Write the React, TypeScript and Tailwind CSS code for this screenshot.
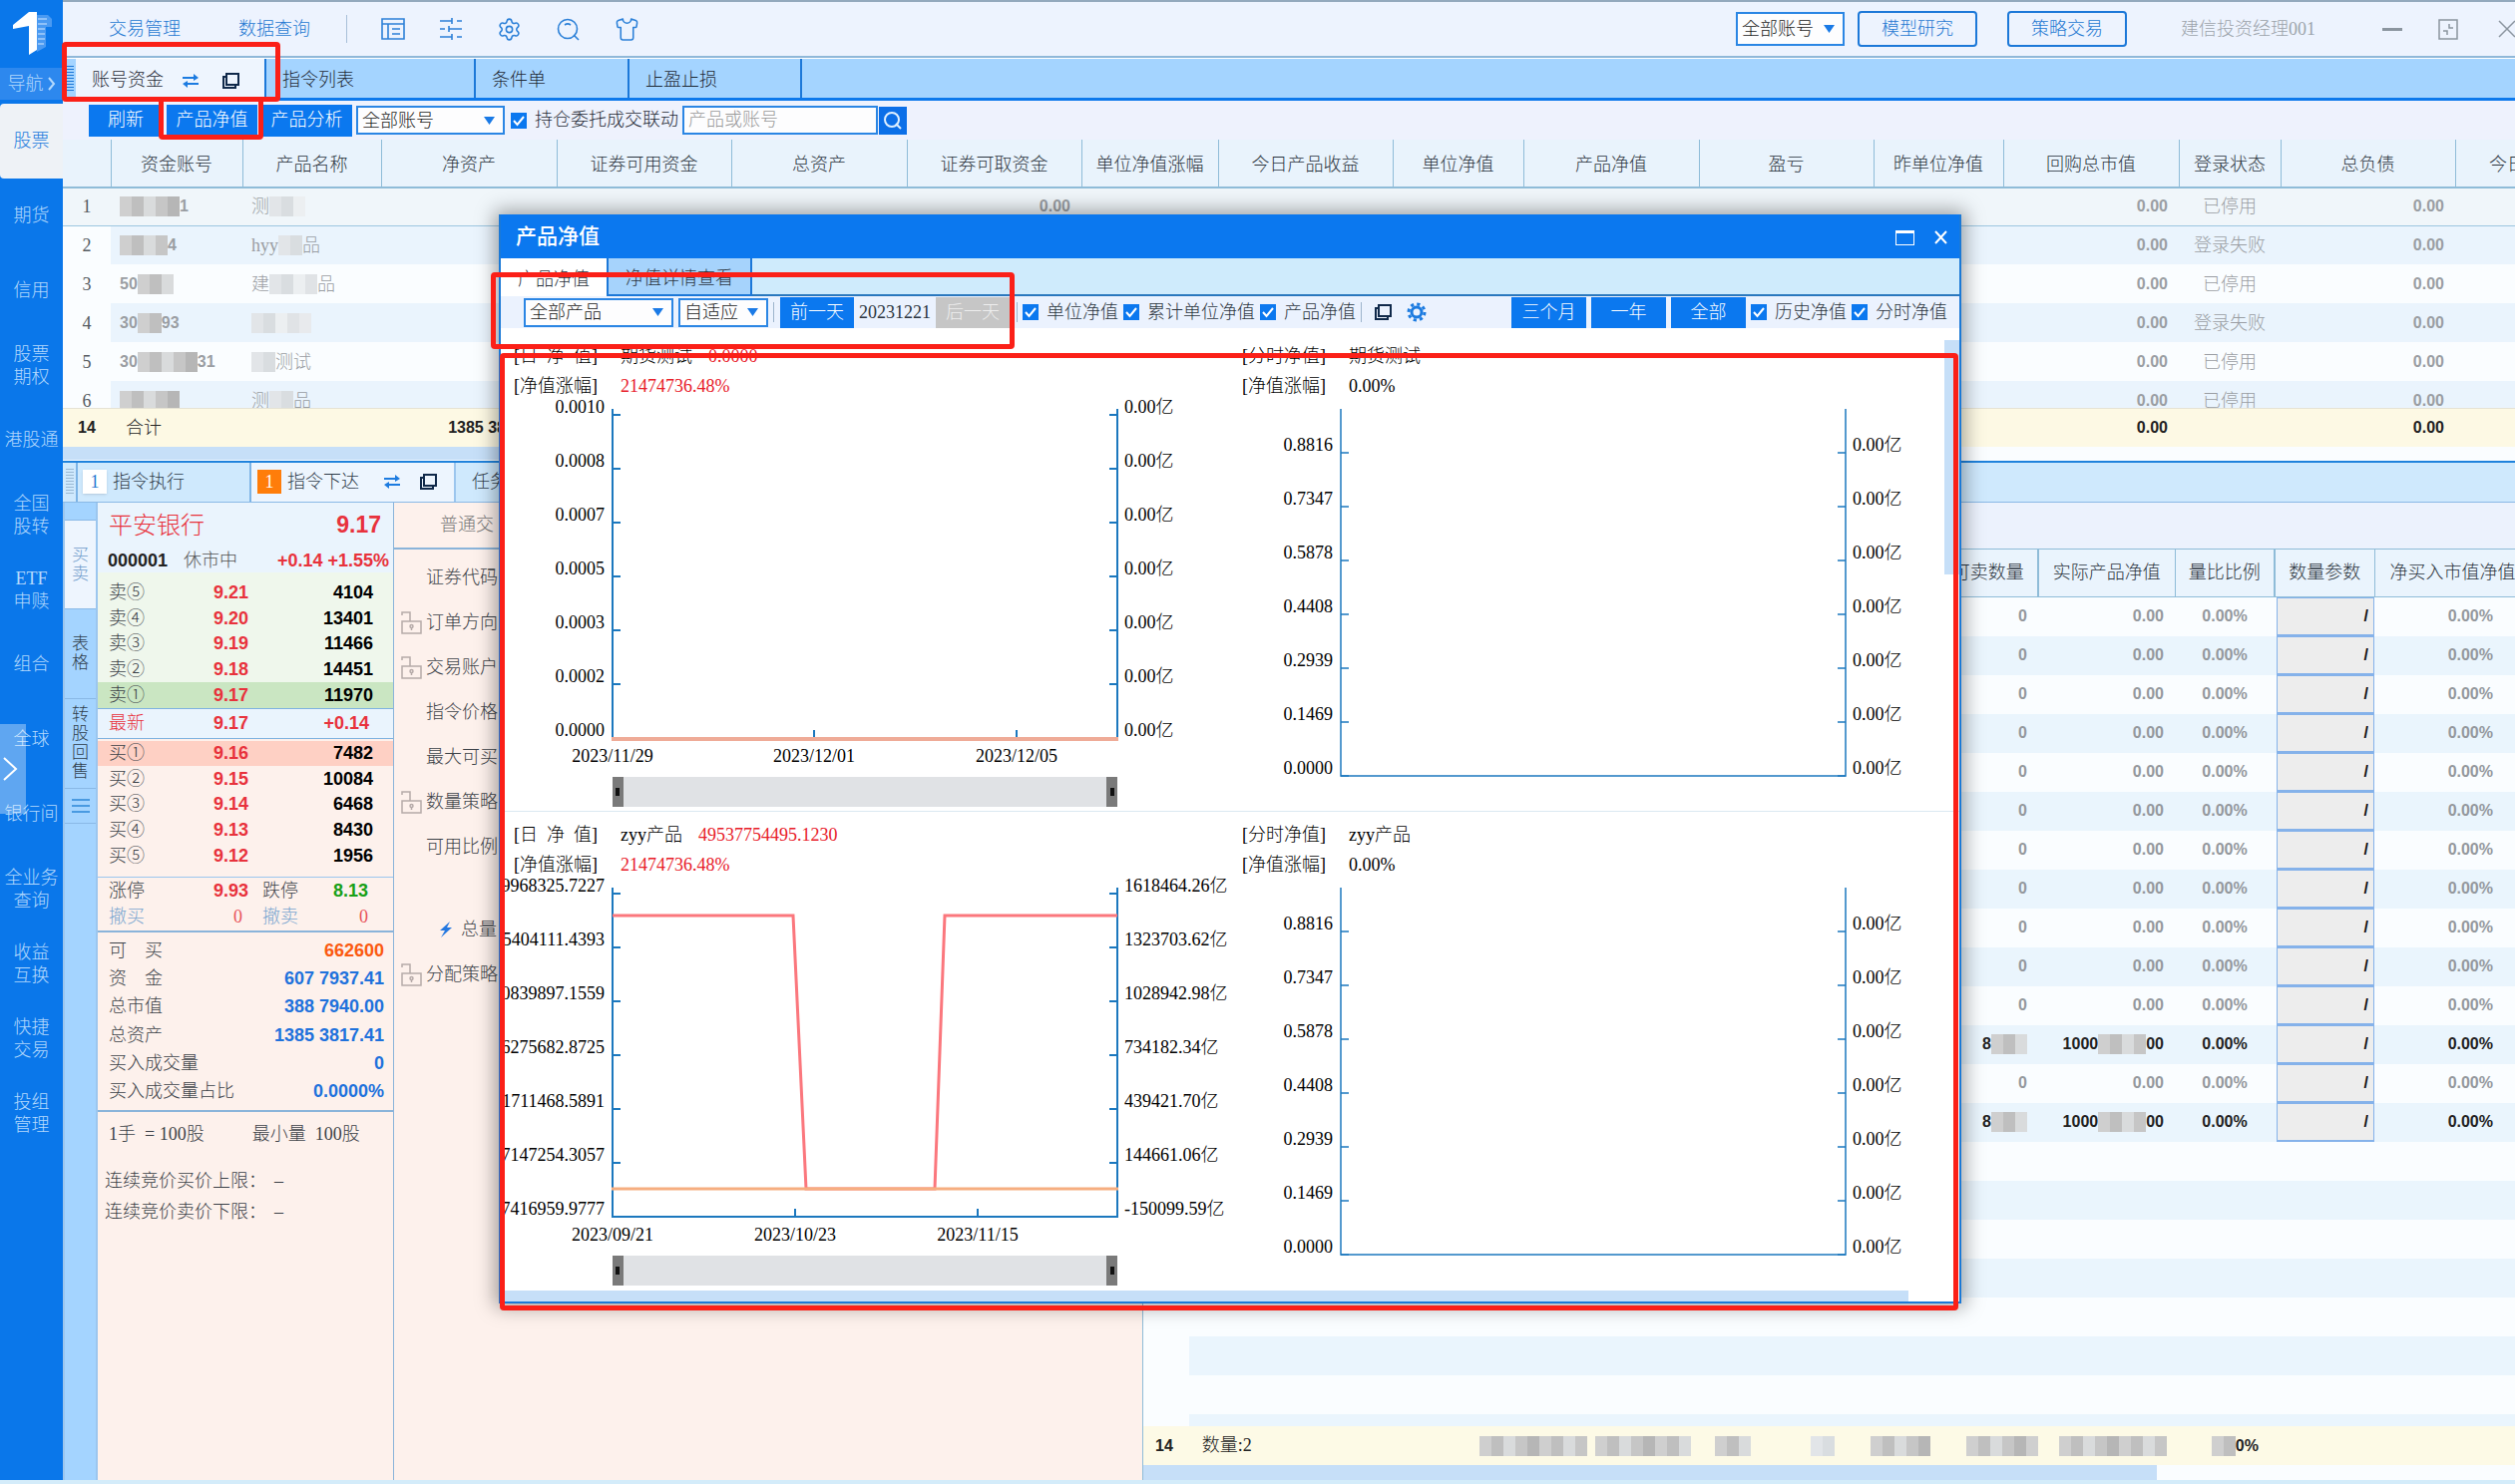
import { useState } from "react";
import type { ReactNode } from "react";
import { Settings, Shirt } from "lucide-react";

const serif = "[font-family:'Liberation_Serif','Noto_Sans_CJK_SC',serif]";
const num = "[font-family:'Liberation_Sans','Noto_Sans_CJK_SC',sans-serif] font-bold";

const menuItems = [
  ["期货"],
  ["信用"],
  ["股票", "期权"],
  ["港股通"],
  ["全国", "股转"],
  ["ETF", "申赎"],
  ["组合"],
  ["全球"],
  ["银行间"],
  ["全业务", "查询"],
  ["收益", "互换"],
  ["快捷", "交易"],
  ["投组", "管理"],
];

const accountColumns = [
  { label: "", width: "w-[48px]" },
  { label: "资金账号", width: "w-[132px]" },
  { label: "产品名称", width: "w-[139px]" },
  { label: "净资产", width: "w-[176px]" },
  { label: "证券可用资金", width: "w-[175px]" },
  { label: "总资产", width: "w-[176px]" },
  { label: "证券可取资金", width: "w-[175px]" },
  { label: "单位净值涨幅", width: "w-[137px]" },
  { label: "今日产品收益", width: "w-[175px]" },
  { label: "单位净值", width: "w-[131px]" },
  { label: "产品净值", width: "w-[176px]" },
  { label: "盈亏", width: "w-[175px]" },
  { label: "昨单位净值", width: "w-[130px]" },
  { label: "回购总市值", width: "w-[176px]" },
  { label: "登录状态", width: "w-[102px]" },
  { label: "总负债", width: "w-[175px]" },
  { label: "今日产品盈亏", width: "w-[176px]" },
];

// [account start, masked blocks, account end, name start, masked blocks, name end, status]
type AccountRow = [string, number, string, string, number, string, string];

const accountRows: AccountRow[] = [
  ["", 5, "1", "测", 3, "", "已停用"],
  ["", 4, "4", "hyy", 2, "品", "登录失败"],
  ["50", 3, "", "建", 4, "品", "已停用"],
  ["30", 2, "93", "", 5, "", "登录失败"],
  ["30", 5, "31", "", 2, "测试", "已停用"],
  ["", 5, "", "测", 2, "品", "已停用"],
];

const asks = [
  ["卖⑤", "9.21", "4104"],
  ["卖④", "9.20", "13401"],
  ["卖③", "9.19", "11466"],
  ["卖②", "9.18", "14451"],
  ["卖①", "9.17", "11970"],
];

const bids = [
  ["买①", "9.16", "7482"],
  ["买②", "9.15", "10084"],
  ["买③", "9.14", "6468"],
  ["买④", "9.13", "8430"],
  ["买⑤", "9.12", "1956"],
];

const funds = [
  { label: "可　买", value: "662600", color: "text-[#fb5a10]" },
  { label: "资　金", value: "607 7937.41", color: "text-[#1f72dc]" },
  { label: "总市值", value: "388 7940.00", color: "text-[#1f72dc]" },
  { label: "总资产", value: "1385 3817.41", color: "text-[#1f72dc]" },
  { label: "买入成交量", value: "0", color: "text-[#1f72dc]" },
  { label: "买入成交量占比", value: "0.0000%", color: "text-[#1f72dc]" },
];

const orderFields = [
  { label: "证券代码", lock: false },
  { label: "订单方向", lock: true },
  { label: "交易账户", lock: true },
  { label: "指令价格", lock: false },
  { label: "最大可买", lock: false },
  { label: "数量策略", lock: true },
  { label: "可用比例", lock: false },
];

const zeroYi = Array(7).fill("0.00亿");
const intradayTicks = ["0.8816", "0.7347", "0.5878", "0.4408", "0.2939", "0.1469", "0.0000"];

/* ---------- small icons ---------- */

const CopyIcon = ({ className }: { className?: string }) => (
  <svg width="20" height="18" viewBox="0 0 20 18" fill="none" stroke="currentColor" strokeWidth="2" className={className}>
    <rect x="5" y="2" width="12" height="11" />
    <path d="M5 5H2v11h12v-3" />
  </svg>
);

const SwapIcon = () => (
  <svg width="18" height="16" viewBox="0 0 18 16" fill="#1c7be0">
    <path d="M1 4h11V1l5 4-5 3V6H1zM17 12H6v3l-5-4 5-3v2h11z" />
  </svg>
);

const Triangle = ({ className }: { className: string }) => (
  <svg width="11" height="8" viewBox="0 0 11 8" fill="#1a7ae6" className={className}>
    <path d="M0 0h11L5.5 8z" />
  </svg>
);

const LockIcon = () => (
  <svg width="21" height="24" viewBox="0 0 21 24" fill="none" stroke="#b5aaa8" strokeWidth="1.5">
    <rect x="1" y="11" width="19" height="12" />
    <path d="M1 5V2h8v9" />
    <circle cx="10.5" cy="16" r="1.5" />
    <path d="M10.5 17.5V20" />
  </svg>
);

const Grip = ({ color }: { color: string }) => (
  <svg width="8" height="28" viewBox="0 0 8 28" stroke={color} strokeWidth="1">
    {[1, 4, 7, 10, 13, 16, 19, 22, 25].map((y) => (
      <path key={y} d={`M0 ${y + 0.5}h8`} />
    ))}
  </svg>
);

/* ---------- form controls ---------- */

const Picker = ({ label, value, className }: { label: string; value: string; className: string }) => (
  <div className={`relative shrink-0 ${className}`}>
    <select
      aria-label={label}
      className="h-full w-full appearance-none border-2 border-[#2b86e4] bg-[#fdfdfe] pl-1 text-[18px] leading-none text-[#222]"
    >
      <option>{value}</option>
    </select>
    <Triangle className="pointer-events-none absolute top-1/2 right-[10px] -translate-y-1/2" />
  </div>
);

const Check = ({ label }: { label: string }) => {
  const [checked, setChecked] = useState(true);
  return (
    <label className="flex shrink-0 items-center gap-2 whitespace-nowrap">
      <span className="relative size-4">
        <input
          type="checkbox"
          checked={checked}
          onChange={() => setChecked(!checked)}
          className="block size-4 appearance-none border border-[#0b78ef] bg-white checked:bg-[#0b78ef]"
        />
        {checked && (
          <svg viewBox="0 0 16 16" fill="none" stroke="#fff" strokeWidth="2" className="pointer-events-none absolute inset-0">
            <path d="M3 8l3.5 4L13 4" />
          </svg>
        )}
      </span>
      {label}
    </label>
  );
};

const BlueButton = ({ children, className }: { children: ReactNode; className: string }) => (
  <button className={`shrink-0 bg-[#0b78ef] text-center text-[18px] whitespace-nowrap text-white ${className}`}>{children}</button>
);

// Masked digits: a strip of grey squares
const maskShades = ["bg-[#cfcfcf]", "bg-[#bfbfbf]", "bg-[#d9dbdc]", "bg-[#c6c6c6]", "bg-[#b6b6b6]"];
const paleShades = ["bg-[#e2e5e8]", "bg-[#d9dde0]", "bg-[#eceff1]", "bg-[#e0e3e6]", "bg-[#e8eaed]"];

const Mask = ({ count, pale }: { count: number; pale?: boolean }) => (
  <span className="flex h-5 shrink-0">
    {Array.from({ length: count }, (_, i) => (
      <span key={i} className={`w-3 ${(pale ? paleShades : maskShades)[i % 5]}`} />
    ))}
  </span>
);

/* ---------- main window ---------- */

const Sidebar = () => (
  <nav className="relative flex w-[63px] shrink-0 flex-col bg-[#0a77ea] text-[18px] leading-[23px] text-[#b4d9fd]">
    <div className="flex h-[68px] items-center justify-center">
      <svg width="42" height="46" viewBox="0 0 42 46">
        <path d="M24 4h13l4 4v8h-6v20l-9 5z" fill="#4a9af2" />
        <path d="M27 8h9M27 13h9M27 18h7M27 23h7M27 28h7M27 33h6" stroke="#8fc1f8" strokeWidth="2" />
        <path d="M18 1h8v38l-8 5V15L2 18v-4z" fill="#fff" />
      </svg>
    </div>
    <button className="flex h-[32px] items-center justify-center gap-1 bg-[#2d88ee]">
      导航
      <svg width="8" height="14" viewBox="0 0 8 14" fill="none" stroke="currentColor" strokeWidth="2">
        <path d="M1 1l5 6-5 6" />
      </svg>
    </button>
    <a href="#stock" className="mt-1 flex h-[75px] items-center justify-center rounded-l bg-[#eef2f6] text-[#2079dc]">
      股票
    </a>
    {menuItems.map((item) => (
      <a key={item.join("")} href="#menu" className="flex h-[75px] shrink-0 flex-col items-center justify-center whitespace-nowrap">
        {item.map((line) => (
          <span key={line}>{line}</span>
        ))}
      </a>
    ))}
    <button aria-label="展开" className="absolute top-[726px] left-0 flex h-[90px] w-[26px] items-center bg-white/35 pl-[2px]">
      <svg width="16" height="26" viewBox="0 0 16 26" fill="none" stroke="#fff" strokeWidth="2">
        <path d="M2 2l12 11L2 24" />
      </svg>
    </button>
  </nav>
);

const TopBar = () => (
  <header className="flex h-[58px] shrink-0 items-center border-t-2 border-b-2 border-t-[#93a9bd] border-b-[#8fb8d9] bg-[#edf3fe] text-[18px] text-[#2478d2]">
    <a href="#trade" className="ml-[46px]">交易管理</a>
    <a href="#query" className="ml-[58px]">数据查询</a>
    <span className="mr-[34px] ml-[36px] h-7 w-px bg-[#a8bfd8]" />
    <div className="flex items-center gap-[34px] text-[#2c80d8]">
      <button aria-label="布局">
        <svg width="24" height="24" viewBox="0 0 24 24" fill="none" stroke="currentColor" strokeWidth="1.6">
          <path d="M1 2h22v20H1zM1 7h22M7 7v15M11 12h8M11 17h8" />
        </svg>
      </button>
      <button aria-label="参数">
        <svg width="24" height="24" viewBox="0 0 24 24" fill="none" stroke="currentColor" strokeWidth="1.6">
          <path d="M1 4h12M18 4h5M13 1v6M1 12h5M10 12h13M10 9v6M1 20h12M18 20h5M13 17v6" />
        </svg>
      </button>
      <button aria-label="设置"><Settings size={25} strokeWidth={1.5} /></button>
      <button aria-label="搜索">
        <svg width="25" height="25" viewBox="0 0 25 25" fill="none" stroke="currentColor" strokeWidth="1.6">
          <circle cx="12" cy="12" r="9.5" />
          <path d="M9 8a5 5 0 0 1 6 0M18 18l5 5" />
        </svg>
      </button>
      <button aria-label="换肤"><Shirt size={25} strokeWidth={1.5} /></button>
    </div>
    <div className="ml-auto flex shrink-0 items-center">
      <Picker label="账号" value="全部账号" className="h-[34px] w-[109px]" />
      <button className="ml-[13px] h-[36px] w-[120px] rounded-sm border-2 border-[#1c78d8]">模型研究</button>
      <button className="ml-[30px] h-[36px] w-[120px] rounded-sm border-2 border-[#1c78d8]">策略交易</button>
      <span className="ml-[54px] text-[#9ca3ab]">建信投资经理001</span>
      <button aria-label="最小化" className="ml-[67px] h-[3px] w-[20px] bg-[#8b959f]" />
      <button aria-label="还原" className="ml-[36px] text-[#8b959f]">
        <svg width="20" height="21" viewBox="0 0 20 21" fill="none" stroke="currentColor" strokeWidth="1.5">
          <path d="M1 1h18v19H1zM11 5v4h4M9 16v-4H5" />
        </svg>
      </button>
      <button aria-label="关闭" className="ml-[40px] text-[#8b959f]">
        <svg width="17" height="18" viewBox="0 0 17 18" fill="none" stroke="currentColor" strokeWidth="1.5">
          <path d="M1 1l16 16M17 1L1 17" />
        </svg>
      </button>
    </div>
  </header>
);

const AccountTabs = () => (
  <div className="flex h-[43px] shrink-0 items-stretch border-t border-b-3 border-t-white border-b-[#0d79ec] bg-[#a4d4ff] text-[18px] text-[#1f2a36]">
    <div className="flex w-[13px] items-center pl-[3px]">
      <Grip color="#1c78d8" />
    </div>
    <div className="flex w-[191px] items-center gap-[18px] border-r-2 border-[#1c78d8] bg-[#eef5fe] pt-1 pl-[16px]">
      <button>账号资金</button>
      <SwapIcon />
      <CopyIcon className="ml-1 text-[#10294a]" />
    </div>
    <button className="w-[210px] border-r-2 border-[#1c78d8] pt-1 pl-[16px] text-left">指令列表</button>
    <button className="w-[154px] border-r-2 border-[#1c78d8] pt-1 pl-[16px] text-left">条件单</button>
    <button className="w-[173px] border-r-2 border-[#1c78d8] pt-1 pl-[16px] text-left">止盈止损</button>
  </div>
);

const AccountToolbar = () => (
  <div className="flex h-[39px] shrink-0 items-center bg-[#eef2fd] pl-[26px] text-[18px] text-[#1f2a36]">
    <BlueButton className="h-[32px] w-[74px]">刷新</BlueButton>
    <BlueButton className="ml-1 h-[32px] w-[91px]">产品净值</BlueButton>
    <BlueButton className="mr-1 ml-1 h-[32px] w-[91px]">产品分析</BlueButton>
    <Picker label="账号范围" value="全部账号" className="mr-[6px] h-[29px] w-[149px]" />
    <Check label="持仓委托成交联动" />
    <input
      aria-label="产品或账号"
      placeholder="产品或账号"
      className="ml-1 h-[29px] w-[196px] border-2 border-[#2b86e4] bg-[#fdfdfe] px-1 placeholder:text-[#9a9a9a]"
    />
    <button aria-label="查找" className="ml-px flex size-[28px] items-center justify-center bg-[#0b6fe8]">
      <svg width="20" height="20" viewBox="0 0 20 20" fill="none" stroke="#dff0ff" strokeWidth="2">
        <circle cx="9" cy="9" r="7" />
        <path d="M13 13l5 5" />
      </svg>
    </button>
  </div>
);

const AccountTable = () => (
  <div className="flex shrink-0 flex-col">
    <div className="h-[269px] overflow-hidden">
      <table className="w-[2574px] table-fixed border-collapse text-[18px] leading-none">
        <thead>
          <tr className="h-[48px] bg-[#e9f3fc] text-[#2c3540]">
            {accountColumns.map((col, i) => (
              <th key={i} className={`border-r border-b-2 border-[#8fbcd8] p-0 pt-[2px] font-light ${col.width}`}>
                {col.label}
              </th>
            ))}
          </tr>
        </thead>
        <tbody className="text-[#9a9ea3]">
          {accountRows.map(([a, aMask, b, c, cMask, d, status], i) => (
            <tr
              key={i}
              className={
                i === 0
                  ? "h-[38px] border-b border-[#9cc6e0] bg-[#f0f6fa]"
                  : i % 2 === 1
                    ? "h-[39px] bg-[#eaf4fd]"
                    : "h-[39px] bg-[#fafdff]"
              }
            >
              <td className={`p-0 text-center text-[#555b61] ${i === 0 ? "" : "bg-[#fafdff]"}`}>{i + 1}</td>
              <td className="p-0">
                <div className={`flex items-center pl-[9px] text-[16px] ${num}`}>
                  {a}
                  <Mask count={aMask} />
                  {b}
                </div>
              </td>
              <td className="p-0">
                <div className="flex items-center pl-[9px]">
                  {c}
                  <Mask count={cMask} pale />
                  {d}
                </div>
              </td>
              <td colSpan={3} />
              <td className={`p-0 pr-[11px] text-right text-[16px] ${num}`}>{i === 0 ? "0.00" : ""}</td>
              <td colSpan={6} />
              <td className={`p-0 pr-[11px] text-right text-[16px] ${num}`}>0.00</td>
              <td className="p-0 text-center">{status}</td>
              <td className={`p-0 pr-[11px] text-right text-[16px] ${num}`}>0.00</td>
              <td />
            </tr>
          ))}
        </tbody>
      </table>
    </div>
    <div className="overflow-hidden">
      <table className="w-[2574px] table-fixed border-collapse text-[18px] leading-none">
        <colgroup>
          {accountColumns.map((col, i) => (
            <col key={i} className={col.width} />
          ))}
        </colgroup>
        <tbody>
          <tr className="h-[38px] border-t border-[#e6e3d4] bg-[#fdf9e4] text-[#222]">
            <td className={`p-0 text-center text-[16px] ${num}`}>14</td>
            <td className="p-0 pl-[15px]">合计</td>
            <td />
            <td className={`p-0 pr-[11px] text-right text-[16px] ${num}`}>1385 3817.41</td>
            <td colSpan={9} />
            <td className={`p-0 pr-[11px] text-right text-[16px] ${num}`}>0.00</td>
            <td />
            <td className={`p-0 pr-[11px] text-right text-[16px] ${num}`}>0.00</td>
            <td />
          </tr>
        </tbody>
      </table>
    </div>
    <div className="h-[14px] bg-[#fafdff]">
      <div className="h-[13px] w-3/5 bg-[#c6dff8]" />
    </div>
  </div>
);

const OrderTabs = () => (
  <div className="flex h-[42px] shrink-0 items-stretch border-t-2 border-b border-t-[#1f82dc] border-b-[#8ab9e6] bg-[#cfe9fd] text-[18px] text-[#2f3c4a]">
    <div className="flex w-[13px] items-center pl-[3px]">
      <Grip color="#9bb9d3" />
    </div>
    <button className="flex w-[176px] items-center gap-[6px] border-x-2 border-[#7db4e6] pl-[5px]">
      <span className="size-[24px] bg-white text-center leading-[24px] text-[#2478d2] shadow">1</span>
      指令执行
    </button>
    <div className="flex w-[205px] items-center border-r-2 border-[#9cc6ee] bg-[#edf5fe] pl-[6px]">
      <span className="mr-[6px] size-[24px] bg-[#ff7d0a] text-center leading-[24px] text-white">1</span>
      <button>指令下达</button>
      <span className="ml-[24px]"><SwapIcon /></span>
      <CopyIcon className="ml-[18px] text-[#10294a]" />
    </div>
    <button className="pl-[16px] text-left">任务</button>
  </div>
);

const SideTabs = () => (
  <div className="flex w-[35px] shrink-0 flex-col border-x-2 border-[#9cc6ee] bg-[#a4d4ff] pt-[17px] text-[17px] leading-[19px] text-[#2f3c4a]">
    <button className="flex h-[90px] items-center justify-center border-y border-[#8ab9e6] bg-[#eef5fe] text-[#6f9ccb]">
      <span className="w-[18px]">买卖</span>
    </button>
    <button className="flex h-[90px] items-center justify-center border-b border-[#8ab9e6]">
      <span className="w-[18px]">表格</span>
    </button>
    <button className="flex h-[90px] items-center justify-center border-b border-[#8ab9e6]">
      <span className="w-[18px]">转股回售</span>
    </button>
    <button aria-label="更多" className="flex h-[35px] items-center justify-center border-b border-[#8ab9e6]">
      <svg width="18" height="16" viewBox="0 0 18 16" stroke="#2b86d8" strokeWidth="1.5">
        <path d="M0 2h18M0 8h18M0 14h18" />
      </svg>
    </button>
  </div>
);

const Level = ({ row, className }: { row: string[]; className: string }) => (
  <div className={`grid grid-cols-[70px_1fr_125px] items-center pr-[20px] pl-[11px] ${className}`}>
    <span className="text-[#3c4248]">{row[0]}</span>
    <span className={`text-right text-[#e8323c] ${num}`}>{row[1]}</span>
    <span className={`text-right text-black ${num}`}>{row[2]}</span>
  </div>
);

const QuotePanel = () => (
  <section className="flex w-[297px] shrink-0 flex-col border-r border-[#8ab4da] bg-[#fdf1ec] text-[18px] leading-none">
    <div className="flex h-[46px] items-center justify-between bg-[#eaf4fd] pr-[12px] pl-[11px] text-[24px] text-[#e8323c]">
      <span>平安银行</span>
      <span className={`text-[23px] ${num}`}>9.17</span>
    </div>
    <div className="flex h-[24px] items-center bg-[#eaf4fd] pr-1 pl-[10px]">
      <span className={`text-[#222] ${num}`}>000001</span>
      <span className="ml-[16px] text-[#555]">休市中</span>
      <span className={`ml-auto text-[#e8323c] ${num}`}>+0.14 +1.55%</span>
    </div>
    <div className="grid h-[136px] grid-rows-5 bg-[#eff7ec] pt-2">
      {asks.map((row, i) => (
        <Level key={row[0]} row={row} className={i === 4 ? "bg-[#cae6c2]" : ""} />
      ))}
    </div>
    <div className="grid h-[31px] grid-cols-[70px_1fr_121px] items-center border-y border-[#7fb2e0] bg-[#eaf4fd] pr-[24px] pl-[11px] text-[#e8323c]">
      <span>最新</span>
      <span className={`text-right ${num}`}>9.17</span>
      <span className={`text-right ${num}`}>+0.14</span>
    </div>
    <div className="mt-[2px] grid h-[136px] grid-rows-5 pb-2">
      {bids.map((row, i) => (
        <Level key={row[0]} row={row} className={i === 0 ? "bg-[#fed0c4]" : ""} />
      ))}
    </div>
    <div className="grid h-[56px] grid-cols-[70px_70px_50px_70px] grid-rows-2 items-center border-t border-b-2 border-t-[#9cc6ee] border-b-[#8ab4da] pl-[11px]">
      <span className="text-[#3c4248]">涨停</span>
      <span className={`text-right text-[#e8323c] ${num}`}>9.93</span>
      <span className="pl-[14px] whitespace-nowrap text-[#3c4248]">跌停</span>
      <span className={`text-right text-[#17a017] ${num}`}>8.13</span>
      <span className="text-[#7ba6d0]">撤买</span>
      <span className="pr-[6px] text-right text-[#e8525a]">0</span>
      <span className="pl-[14px] whitespace-nowrap text-[#7ba6d0]">撤卖</span>
      <span className="text-right text-[#e8525a]">0</span>
    </div>
    <dl className="grid h-[180px] grid-rows-6 border-b-2 border-[#8ab4da] pt-1 pb-[4px]">
      {funds.map((f) => (
        <div key={f.label} className="flex items-center justify-between pr-[9px] pl-[11px]">
          <dt className="text-[#3c4248]">{f.label}</dt>
          <dd className={`${num} ${f.color}`}>{f.value}</dd>
        </div>
      ))}
    </dl>
    <div className="pt-[13px] pl-[7px] text-[#3c4248]">
      <p className="flex gap-[48px] pl-1 whitespace-pre">
        <span>1手 {" = "}100股</span>
        <span>最小量 {" "}100股</span>
      </p>
      <p className="mt-[23px] flex leading-[31px]">
        <span className="w-[170px]">连续竞价买价上限：</span>–
      </p>
      <p className="flex leading-[31px]">
        <span className="w-[170px]">连续竞价卖价下限：</span>–
      </p>
    </div>
  </section>
);

const OrderForm = () => (
  <section className="w-[750px] shrink-0 overflow-hidden bg-[#fdf1ec] text-[18px] leading-none text-[#3c4248]">
    <div className="flex h-[47px] items-center border-b-2 border-[#8ab4da] pl-[46px] text-[#777]">普通交</div>
    <div className="pt-[6px]">
      {orderFields.map((f) => (
        <div key={f.label} className="flex h-[45px] items-center pl-[7px]">
          <span className="w-[25px]">{f.lock && <LockIcon />}</span>
          {f.label}
        </div>
      ))}
      <div className="mt-[38px] flex h-[45px] items-center gap-[8px] pl-[45px]">
        <svg width="14" height="16" viewBox="0 0 14 16" fill="#2478e0">
          <path d="M11 0L1 9h5l-4 7 11-10H8z" />
        </svg>
        总量
      </div>
      <div className="flex h-[45px] items-center pl-[7px]">
        <span className="w-[25px]"><LockIcon /></span>
        分配策略
      </div>
    </div>
  </section>
);

const holdings = Array.from({ length: 22 }, (_, i) => ({
  index: i + 1,
  empty: i >= 14,
  held: i === 11 || i === 13,
}));

const HoldingsPanel = () => (
  <section className="flex min-w-0 flex-1 flex-col border-l border-[#8fbcd8] bg-[#fafdff]">
    <div className="h-[46px] shrink-0 bg-[#ecf2fd]" />
    <div className="min-h-0 flex-1 overflow-hidden">
      <table className="w-full table-fixed border-collapse text-[16px] leading-none">
        <thead>
          <tr className="h-[48px] border-y border-[#8fbcd8] bg-[#eaf4fd] text-[18px] whitespace-nowrap text-[#2c3540]">
            <th className="w-[46px] border-r border-[#8fbcd8]" />
            <th className="border-r border-[#8fbcd8]" />
            <th className="w-[100px] border-r-2 border-[#8fbcd8] p-0 font-light">可卖数量</th>
            <th className="w-[137px] border-r border-[#8fbcd8] p-0 font-light">实际产品净值</th>
            <th className="w-[100px] border-r-2 border-[#8fbcd8] p-0 font-light">量比比例</th>
            <th className="w-[100px] border-r border-[#8fbcd8] p-0 font-light">数量参数</th>
            <th className="w-[141px] p-0 pl-[15px] text-left font-light">净买入市值净值</th>
          </tr>
        </thead>
        <tbody className={num}>
          {holdings.map((row) => (
            <tr
              key={row.index}
              className={`h-[39px] ${row.index % 2 === 0 ? "bg-[#eaf5fd]" : "bg-[#fafdff]"} ${row.held ? "text-[#222]" : "text-[#94989d]"}`}
            >
              <td className="bg-[#fafdff]" />
              <td />
              {row.empty ? (
                <td colSpan={5} />
              ) : (
                <>
                  <td className="p-0">
                    <div className="flex items-center justify-end pr-[11px]">
                      {row.held ? <>8<Mask count={3} /></> : "0"}
                    </div>
                  </td>
                  <td className="p-0">
                    <div className="flex items-center justify-end pr-[11px]">
                      {row.held ? <>1000<Mask count={4} />00</> : "0.00"}
                    </div>
                  </td>
                  <td className="p-0 text-center">0.00%</td>
                  <td className="p-0 pl-[2px]">
                    <input
                      aria-label={`数量参数 ${row.index}`}
                      defaultValue="/"
                      className="block h-[39px] w-full border border-b-2 border-[#85b2ea] bg-[#ededed] pr-[5px] text-right text-[#111]"
                    />
                  </td>
                  <td className="p-0 pr-[22px] text-right">0.00%</td>
                </>
              )}
            </tr>
          ))}
        </tbody>
      </table>
    </div>
    <div className="flex h-[39px] shrink-0 items-center bg-[#fdfae6] pl-[12px] text-[18px] text-[#222]">
      <span className={`text-[16px] ${num}`}>14</span>
      <span className="ml-[29px] w-[278px]">数量:2</span>
      <Mask count={9} />
      <span className="ml-[8px]"><Mask count={8} /></span>
      <span className="ml-[24px]"><Mask count={3} /></span>
      <span className="ml-[60px]"><Mask count={2} pale /></span>
      <span className="ml-[36px]"><Mask count={5} /></span>
      <span className="ml-[36px]"><Mask count={6} /></span>
      <span className="ml-[21px]"><Mask count={9} /></span>
      <span className="ml-[45px]"><Mask count={2} /></span>
      <span className={`text-[16px] ${num}`}>0%</span>
    </div>
    <div className="h-[15px] shrink-0">
      <div className="h-full w-[1016px] bg-[#c6dff8]" />
    </div>
  </section>
);

/* ---------- net value dialog ---------- */

type ChartProps = {
  title: string;
  name: string;
  total?: string;
  change: string;
  changeColor: string;
  left: string[];
  right: string[];
  firstTick: number;
  dates?: { x: number; label: string }[];
  children?: ReactNode;
};

const ChartPanel = ({ title, name, total, change, changeColor, left, right, firstTick, dates, children }: ChartProps) => {
  const bottom = firstTick + 54 * 6;
  return (
    <div className="w-[730px] shrink-0 pt-2 text-[18px] leading-[30px] text-black">
      <p className="flex pl-[13px]">
        <span className="w-[107px] whitespace-pre">{title}</span>
        {name}
        {total && <span className="ml-[16px] text-[#e8202a]">{total}</span>}
      </p>
      <p className="flex pl-[13px]">
        <span className="w-[107px]">[净值涨幅]</span>
        <span className={changeColor}>{change}</span>
      </p>
      <svg width="730" height="411" viewBox="0 0 730 411" className="block overflow-visible" fontSize="18">
        <g stroke="#1c78be" strokeWidth={dates ? 2 : 1.5} fill="none">
          <path d={`M112 8V${bottom}H618V8`} />
          {left.map((_, i) => (
            <path key={i} d={`M112 ${firstTick + 54 * i}h8M618 ${firstTick + 54 * i}h-8`} />
          ))}
          {dates?.slice(1).map((d) => <path key={d.x} d={`M${d.x} ${bottom}v-8`} />)}
        </g>
        {left.map((value, i) => (
          <text key={i} x="104" y={firstTick + 54 * i - 2} textAnchor="end">{value}</text>
        ))}
        {right.map((value, i) => (
          <text key={i} x="625" y={firstTick + 54 * i - 2}>{value}</text>
        ))}
        {dates?.map((d) => (
          <text key={d.x} x={d.x} y={bottom + 24} textAnchor="middle">{d.label}</text>
        ))}
        {children}
        {dates && (
          <g>
            <path d="M112 377h506v30H112z" fill="#e0e2e5" />
            <path d="M112 377h11v30h-11zM607 377h11v30h-11z" fill="#7a7a7a" />
            <path d="M115 388h4v8h-4zM611 388h4v8h-4z" fill="#111" />
          </g>
        )}
      </svg>
    </div>
  );
};

const NetValueDialog = () => (
  <div
    role="dialog"
    aria-label="产品净值"
    className="absolute top-[215px] left-[500px] w-[1466px] border-x-2 border-b-2 border-[#1b79d6] bg-white text-[18px] shadow-[0_0_18px_4px_rgba(0,0,0,0.35)]"
  >
    <div className="flex h-[44px] items-center bg-[#0b78ef] pt-[2px] pr-[12px] pl-[15px] text-white">
      <h2 className="text-[21px] font-medium">产品净值</h2>
      <button aria-label="最大化" className="ml-auto h-[15px] w-[19px] border border-t-3 border-white" />
      <button aria-label="关闭" className="ml-[20px]">
        <svg width="13" height="14" viewBox="0 0 13 14" stroke="#fff" strokeWidth="2">
          <path d="M1 1l11 12M12 1L1 13" />
        </svg>
      </button>
    </div>
    <div className="flex h-[38px] bg-[#cfebfc] text-[#2c3540]">
      <button className="w-[106px] bg-white pt-1 text-center">产品净值</button>
      <button className="w-[146px] border-x-2 border-b-2 border-[#1c78d8] bg-[#a6d3fc] pt-1">净值详情查看</button>
      <span className="flex-1 border-b-2 border-[#2a78be]" />
    </div>
    <div className="flex h-[32px] items-center bg-[#ebf2fe] pr-[12px] pl-[23px] leading-none text-[#2c3540]">
      <Picker label="产品" value="全部产品" className="h-[29px] w-[150px]" />
      <Picker label="显示方式" value="自适应" className="ml-[5px] h-[29px] w-[90px]" />
      <span className="mr-[6px] ml-[5px] h-5 w-px bg-[#9db4cc]" />
      <BlueButton className="h-[31px] w-[74px]">前一天</BlueButton>
      <span className="w-[82px] text-center">20231221</span>
      <button disabled className="h-[31px] w-[74px] bg-[#c6c6c6] text-[#eee]">后一天</button>
      <span className="mr-[5px] ml-[7px] h-5 w-px bg-[#9db4cc]" />
      <div className="flex gap-[5px]">
        <Check label="单位净值" />
        <Check label="累计单位净值" />
        <Check label="产品净值" />
      </div>
      <span className="mr-[12px] ml-[5px] h-5 w-px bg-[#9db4cc]" />
      <button aria-label="弹出"><CopyIcon className="text-[#10294a]" /></button>
      <button aria-label="设置" className="ml-[13px] text-[#1c7be0]">
        <svg width="20" height="20" viewBox="0 0 20 20" fill="none" stroke="currentColor">
          <circle cx="10" cy="10" r="5" strokeWidth="3" />
          <circle cx="10" cy="10" r="8" strokeWidth="3" strokeDasharray="3.2 3.08" />
        </svg>
      </button>
      <div className="ml-auto flex items-center gap-[5px]">
        <BlueButton className="h-[31px] w-[75px]">三个月</BlueButton>
        <BlueButton className="h-[31px] w-[75px]">一年</BlueButton>
        <BlueButton className="h-[31px] w-[75px]">全部</BlueButton>
        <Check label="历史净值" />
        <Check label="分时净值" />
      </div>
    </div>
    <div className="relative mt-[5px] overflow-hidden">
      <div className="flex h-[480px] border-b border-[#dbe9f2]">
        <ChartPanel
          title="[日  净  值]"
          name="期货测试"
          total="0.0000"
          change="21474736.48%"
          changeColor="text-[#e8202a]"
          left={["0.0010", "0.0008", "0.0007", "0.0005", "0.0003", "0.0002", "0.0000"]}
          right={zeroYi}
          firstTick={14}
          dates={[
            { x: 112, label: "2023/11/29" },
            { x: 314, label: "2023/12/01" },
            { x: 517, label: "2023/12/05" },
          ]}
        >
          <path d="M111 339h508" stroke="#efab97" strokeWidth="4" />
        </ChartPanel>
        <ChartPanel
          title="[分时净值]"
          name="期货测试"
          change="0.00%"
          changeColor="text-black"
          left={intradayTicks}
          right={zeroYi}
          firstTick={52}
        />
      </div>
      <div className="flex h-[480px]">
        <ChartPanel
          title="[日  净  值]"
          name="zyy产品"
          total="49537754495.1230"
          change="21474736.48%"
          changeColor="text-[#e8202a]"
          left={[
            "9968325.7227",
            "5404111.4393",
            "0839897.1559",
            "6275682.8725",
            "1711468.5891",
            "7147254.3057",
            "7416959.9777",
          ]}
          right={[
            "1618464.26亿",
            "1323703.62亿",
            "1028942.98亿",
            "734182.34亿",
            "439421.70亿",
            "144661.06亿",
            "-150099.59亿",
          ]}
          firstTick={14}
          dates={[
            { x: 112, label: "2023/09/21" },
            { x: 295, label: "2023/10/23" },
            { x: 478, label: "2023/11/15" },
          ]}
        >
          <path d="M112 36h181l13 274h129l10-274h173" fill="none" stroke="#fb777d" strokeWidth="3" />
          <path d="M111 310h508" stroke="#f6ae80" strokeWidth="3" />
        </ChartPanel>
        <ChartPanel
          title="[分时净值]"
          name="zyy产品"
          change="0.00%"
          changeColor="text-black"
          left={intradayTicks}
          right={zeroYi}
          firstTick={52}
        />
      </div>
      <div className="absolute top-[7px] right-0 h-[235px] w-[15px] bg-[#c6dff8]" />
      <div className="h-[11px]">
        <div className="h-full w-[1411px] bg-[#c6dff8]" />
      </div>
    </div>
  </div>
);

// Call-out frames around the steps
const Callouts = () => (
  <div className="pointer-events-none">
    <div className="absolute top-[42px] left-[62px] h-[60px] w-[219px] rounded-sm border-5 border-[#fb2018]" />
    <div className="absolute top-[97px] left-[159px] h-[43px] w-[105px] rounded-sm border-5 border-[#fb2018]" />
    <div className="absolute top-[273px] left-[492px] h-[77px] w-[525px] rounded-sm border-5 border-[#fb2018]" />
    <div className="absolute top-[354px] left-[501px] h-[960px] w-[1462px] rounded-sm border-5 border-[#fb2018]" />
  </div>
);

const App = () => {
  return (
    <div className={`relative flex h-screen w-full overflow-hidden border-b-4 border-[#d4ecfa] bg-[#fafdff] font-light ${serif}`}>
      <Sidebar />
      <main className="flex min-w-0 flex-1 flex-col">
        <TopBar />
        <AccountTabs />
        <AccountToolbar />
        <AccountTable />
        <OrderTabs />
        <div className="flex min-h-0 flex-1">
          <SideTabs />
          <QuotePanel />
          <OrderForm />
          <HoldingsPanel />
        </div>
      </main>
      <NetValueDialog />
      <Callouts />
    </div>
  );
};

export default App;
